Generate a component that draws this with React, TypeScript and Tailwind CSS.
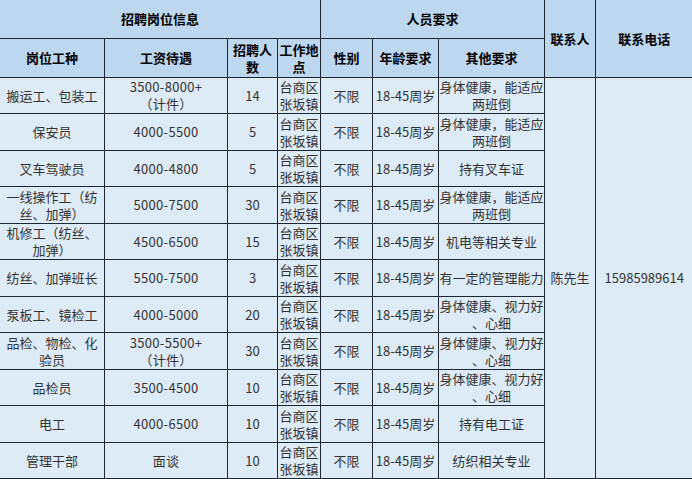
import React from 'react'

type Job = {
  title: React.ReactNode
  salary: React.ReactNode
  count: string
  other: React.ReactNode
}

const jobs: Job[] = [
  { title: '搬运工、包装工', salary: <>3500-8000+<br />（计件）</>, count: '14', other: <>身体健康，能适应<br />两班倒</> },
  { title: '保安员', salary: '4000-5500', count: '5', other: <>身体健康，能适应<br />两班倒</> },
  { title: '叉车驾驶员', salary: '4000-4800', count: '5', other: '持有叉车证' },
  { title: <>一线操作工（纺<br />丝、加弹）</>, salary: '5000-7500', count: '30', other: <>身体健康，能适应<br />两班倒</> },
  { title: <>机修工（纺丝、<br />加弹）</>, salary: '4500-6500', count: '15', other: '机电等相关专业' },
  { title: '纺丝、加弹班长', salary: '5500-7500', count: '3', other: '有一定的管理能力' },
  { title: '泵板工、镜检工', salary: '4000-5000', count: '20', other: <>身体健康、视力好<br />、心细</> },
  { title: <>品检、物检、化<br />验员</>, salary: <>3500-5500+<br />（计件）</>, count: '30', other: <>身体健康、视力好<br />、心细</> },
  { title: '品检员', salary: '3500-4500', count: '10', other: <>身体健康、视力好<br />、心细</> },
  { title: '电工', salary: '4000-6500', count: '10', other: '持有电工证' },
  { title: '管理干部', salary: '面谈', count: '10', other: '纺织相关专业' },
]

const th = 'border border-[#1c2733] bg-[#bdd7ee] text-center align-middle font-bold text-black p-0'
const td = 'border border-[#1c2733] text-center align-middle p-0 leading-[17px]'

export default function App() {
  return (
    <div className="w-[692px] h-[479px] overflow-hidden bg-[#ddebf7] font-['Noto_Sans_CJK_SC','Noto_Sans',sans-serif] text-[13px] text-[#333]">
      <table className="table-fixed border-collapse w-[693px] -ml-px">
        <colgroup>
          <col className="w-[105px]" />
          <col className="w-[123px]" />
          <col className="w-[50px]" />
          <col className="w-[43px]" />
          <col className="w-[52px]" />
          <col className="w-[66px]" />
          <col className="w-[106px]" />
          <col className="w-[51px]" />
          <col className="w-[97px]" />
        </colgroup>
        <thead>
          <tr className="h-[38.5px]">
            <th colSpan={4} className={th + ' border-t-0'}>招聘岗位信息</th>
            <th colSpan={3} className={th + ' border-t-0'}>人员要求</th>
            <th rowSpan={2} className={th + ' border-t-0'}>联系人</th>
            <th rowSpan={2} className={th + ' border-t-0 border-r-0'}>联系电话</th>
          </tr>
          <tr className="h-[38.5px]">
            <th className={th}>岗位工种</th>
            <th className={th}>工资待遇</th>
            <th className={th + ' leading-[17px]'}>招聘人<br />数</th>
            <th className={th + ' leading-[17px]'}>工作地<br />点</th>
            <th className={th}>性别</th>
            <th className={th}>年龄要求</th>
            <th className={th}>其他要求</th>
          </tr>
        </thead>
        <tbody>
          {jobs.map((j, i) => (
            <tr key={i} className="h-[36.5px]">
              <td className={td}>{j.title}</td>
              <td className={td + ' tracking-[0.3px]'}>{j.salary}</td>
              <td className={td}>{j.count}</td>
              <td className={td}>台商区<br />张坂镇</td>
              <td className={td}>不限</td>
              <td className={td}>18-45周岁</td>
              <td className={td}>{j.other}</td>
              {i === 0 && (
                <>
                  <td rowSpan={jobs.length} className={td}>陈先生</td>
                  <td rowSpan={jobs.length} className={td + ' border-r-0'}>15985989614</td>
                </>
              )}
            </tr>
          ))}
        </tbody>
      </table>
    </div>
  )
}
